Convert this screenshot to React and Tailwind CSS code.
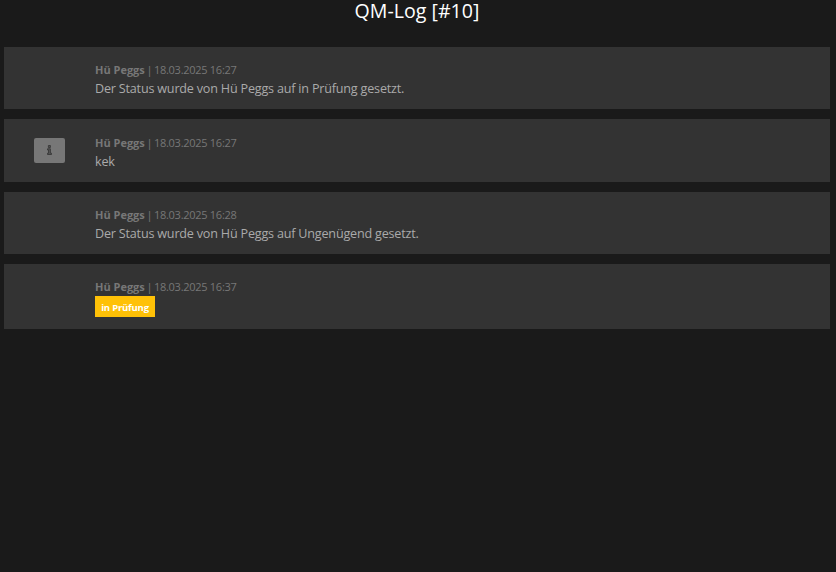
const entries = [
  { time: "18.03.2025 16:27", text: "Der Status wurde von Hü Peggs auf in Prüfung gesetzt.", box: "h-[62px] pt-[15px]" },
  { time: "18.03.2025 16:27", text: "kek", info: true, box: "h-[63px] pt-4" },
  { time: "18.03.2025 16:28", text: "Der Status wurde von Hü Peggs auf Ungenügend gesetzt.", box: "h-[62px] pt-[15px]" },
  { time: "18.03.2025 16:37", badge: "in Prüfung", box: "h-[65px] pt-[15px]" },
];

function Entry({ time, text, badge, info, box }) {
  return (
    <article className={`flex bg-[#333333] ${box}`}>
      <div className="w-[91px] shrink-0 pl-[30px] pt-[3px]">
        {info && (
          <button className="flex h-[25px] w-[31px] items-center justify-center rounded-[2px] bg-[#777777] pb-px">
            <svg width="5" height="10" viewBox="0 0 5 10" fill="none" stroke="#333333" strokeWidth="0.8">
              <path d="M1.4 0.5h2v2h-2zM0.5 3.8H3.4V8.2H4.5V9.5H0.5V8.2H1.5V5H0.5z" fill="#555555" />
            </svg>
          </button>
        )}
      </div>
      <div>
        <p className="h-[17px] whitespace-nowrap text-[11px] leading-[16px] text-[#777777]">
          <b className="font-bold">Hü Peggs</b>
          <span className="tracking-[-0.2px] [word-spacing:-1px]"> | </span>
          <span className="tracking-[-0.28px]">{time}</span>
        </p>
        {text && <p className="whitespace-nowrap text-[12.6px] leading-[20px] tracking-[-0.2px] text-[#aaaaaa]">{text}</p>}
        {badge && (
          <span className="flex h-[21px] w-[60px] items-center justify-center whitespace-nowrap bg-[#ffc107] pt-[3px] text-[9.5px] font-bold tracking-[-0.2px] text-white">
            {badge}
          </span>
        )}
      </div>
    </article>
  );
}

export default function App() {
  return (
    <main className="h-[572px] w-[836px] bg-[#1a1a1a] pl-1 pr-[6px] font-['Open_Sans','Noto_Sans',sans-serif]">
      <h1 className="h-[47px] text-center text-[19.6px] leading-[22px] text-white">QM-Log [#10]</h1>
      <div className="flex flex-col gap-[10px]">
        {entries.map((e, i) => <Entry key={i} {...e} />)}
      </div>
    </main>
  );
}
